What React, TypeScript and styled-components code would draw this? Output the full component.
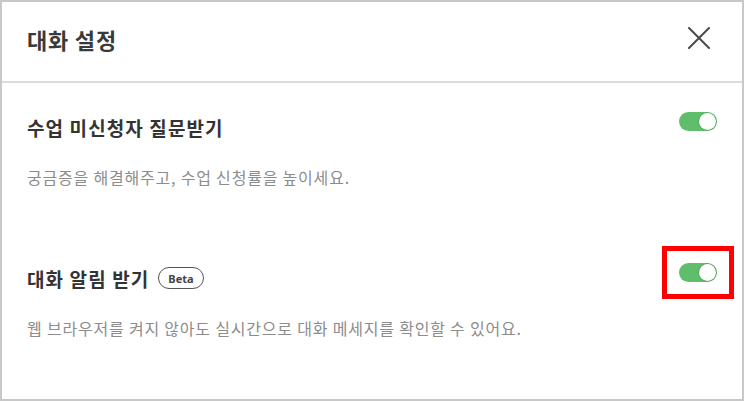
import React from 'react';
import styled, { createGlobalStyle } from 'styled-components';

const GlobalStyle = createGlobalStyle`
  * {
    box-sizing: border-box;
  }

  body {
    margin: 0;
    background: #fff;
    font-family: 'Noto Sans CJK KR', 'Noto Sans', sans-serif;
  }
`;

const settings = [
  {
    id: 'question',
    title: '수업 미신청자 질문받기',
    description: '궁금증을 해결해주고, 수업 신청률을 높이세요.',
    beta: false,
    highlighted: false,
  },
  {
    id: 'alarm',
    title: '대화 알림 받기',
    description: '웹 브라우저를 켜지 않아도 실시간으로 대화 메세지를 확인할 수 있어요.',
    beta: true,
    highlighted: true,
  },
];

function CloseIcon() {
  return (
    <svg width="22" height="22" viewBox="0 0 22 22" fill="none">
      <path d="M1 1L21 21M21 1L1 21" stroke="#4a4a4a" strokeWidth="2" strokeLinecap="round" />
    </svg>
  );
}

function App() {
  return (
    <>
      <GlobalStyle />
      <Modal>
        <Header>
          <HeaderTitle>대화 설정</HeaderTitle>
          <CloseButton aria-label="닫기">
            <CloseIcon />
          </CloseButton>
        </Header>

        <Body>
          {settings.map((item) => (
            <Section key={item.id}>
              <SettingRow>
                <TitleWrap>
                  <SettingTitle>{item.title}</SettingTitle>
                  {item.beta && <BetaBadge>Beta</BetaBadge>}
                </TitleWrap>
                <Toggle $on $highlighted={item.highlighted}>
                  <Knob />
                </Toggle>
              </SettingRow>
              <Description>{item.description}</Description>
            </Section>
          ))}
        </Body>
      </Modal>
    </>
  );
}

const Modal = styled.div`
  width: 744px;
  height: 401px;
  border: 2px solid #c8c8c8;
  background: #fff;
  display: flex;
  flex-direction: column;
`;

const Header = styled.div`
  height: 81px;
  display: flex;
  align-items: center;
  justify-content: space-between;
  padding: 0 32px 0 25px;
  border-bottom: 2px solid #dcdcdc;
`;

const HeaderTitle = styled.h1`
  margin: -5px 0 0 0;
  font-size: 22px;
  font-weight: 600;
  letter-spacing: 0.8px;
  color: #3a3a3a;
  line-height: 28px;
`;

const CloseButton = styled.button`
  border: 0;
  background: none;
  padding: 0;
  display: flex;
  cursor: pointer;
  margin-top: -7px;
`;

const Body = styled.div`
  padding: 32px 25px 0 25px;
  display: flex;
  flex-direction: column;
  gap: 78px;
`;

const Section = styled.div`
  display: flex;
  flex-direction: column;
  gap: 25px;
`;

const SettingRow = styled.div`
  display: flex;
  justify-content: space-between;
  align-items: flex-start;
`;

const TitleWrap = styled.div`
  display: flex;
  align-items: center;
  gap: 9px;
`;

const SettingTitle = styled.h2`
  margin: 0;
  font-size: 19px;
  font-weight: 600;
  letter-spacing: 1.1px;
  color: #333;
  line-height: 26px;
`;

const BetaBadge = styled.span`
  height: 22px;
  padding: 0 9px;
  border: 1.5px solid #555;
  border-radius: 11px;
  font-family: 'Noto Sans', sans-serif;
  font-size: 11px;
  font-weight: 700;
  color: #444;
  display: inline-flex;
  align-items: center;
  margin-top: -2px;
`;

const Toggle = styled.div<{ $on?: boolean; $highlighted?: boolean }>`
  position: relative;
  width: 38px;
  height: 19px;
  border-radius: 10px;
  background: ${(p) => (p.$on ? '#5fbe69' : '#d5d5d5')};
  margin-top: -3px;
  display: flex;
  align-items: center;
  justify-content: ${(p) => (p.$on ? 'flex-end' : 'flex-start')};
  padding: 0 1px;

  &::after {
    content: '';
    display: ${(p) => (p.$highlighted ? 'block' : 'none')};
    position: absolute;
    inset: -17px;
    border: 5px solid #f00;
  }
`;

const Knob = styled.span`
  width: 17px;
  height: 17px;
  border-radius: 50%;
  background: #fff;
  box-shadow: 0 0 1px 0.5px rgba(0, 0, 0, 0.25);
`;

const Description = styled.p`
  margin: 0;
  font-size: 16px;
  letter-spacing: 0.8px;
  color: #8c8c8c;
  line-height: 22px;
`;

export default App;
